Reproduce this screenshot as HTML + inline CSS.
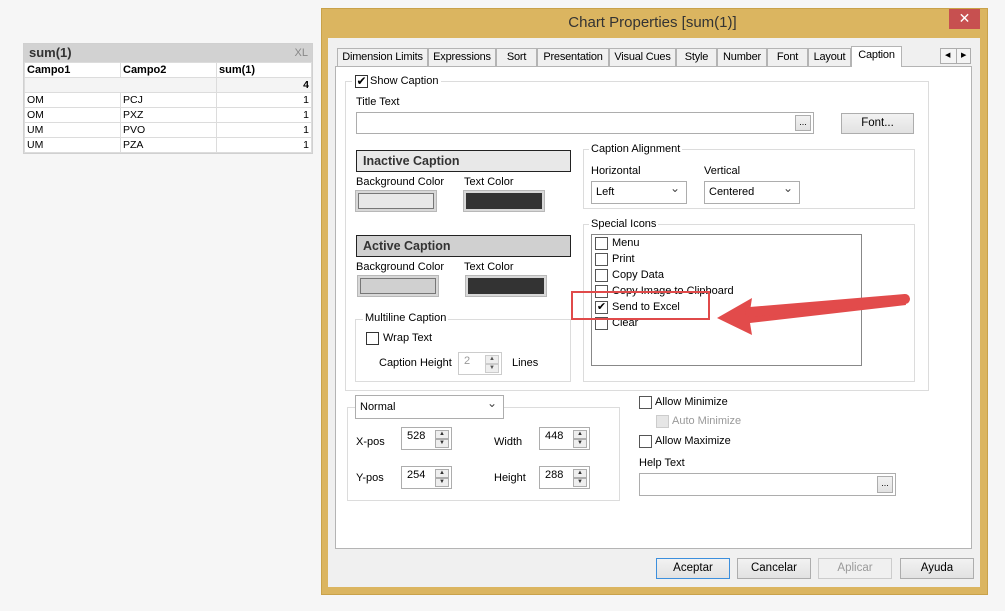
<!DOCTYPE html>
<html><head><meta charset="utf-8"><style>
*{box-sizing:border-box;margin:0;padding:0}
body{width:1005px;height:611px;background:#f6f6f6;font-family:"Liberation Sans",sans-serif;font-size:11px;color:#000;position:relative;overflow:hidden}
.a{position:absolute;white-space:nowrap}
.tab{position:absolute;top:48px;height:19px;background:#f0f0f0;border:1px solid #b4b4b4;border-bottom:none;font-size:11px;line-height:17px;text-align:center;letter-spacing:-0.2px}
.grp{position:absolute;border:1px solid #dcdcdc}
.gl{position:absolute;background:#fff;padding:0 2px;font-size:11px;line-height:13px}
.cb{position:absolute;width:13px;height:13px;border:1px solid #333;background:#fff}
.inp{position:absolute;border:1px solid #adadad;background:#fff}
.btn{position:absolute;border:1px solid #adadad;background:linear-gradient(#f2f2f2,#e2e2e2);text-align:center;font-size:11.5px}
.sel{position:absolute;border:1px solid #adadad;background:#fff;font-size:11px;line-height:20px;padding-left:4px}
.sel:after{content:"⌄";position:absolute;right:6px;top:-4px;font-size:12px;color:#444}
.spin{position:absolute;border:1px solid #adadad;background:#fff;font-size:11px;padding-left:5px;line-height:16px}
.sp{position:absolute;right:2px;width:14px;height:9px;border:1px solid #adadad;background:#eee;font-size:6px;line-height:7px;text-align:center;color:#333}
td{border:1px solid #dcdcdc;padding:0 2px;height:15px;font-size:10.5px}
</style></head><body>
<div class="a" style="left:23px;top:43px;width:290px;height:111px;border:1px solid #d0d0d0;background:#fff">
<div style="height:18px;background:#d2d2d2;font-weight:bold;font-size:13px;padding-left:5px;line-height:18px;color:#333">sum(1)<span style="position:absolute;right:4px;font-weight:normal;color:#888;font-size:11px">XL</span></div>
<table style="border-collapse:collapse;width:100%">
<tr><td style="width:96px;font-weight:bold;font-size:11px">Campo1</td><td style="width:96px;font-weight:bold;font-size:11px">Campo2</td><td style="font-weight:bold;font-size:11px">sum(1)</td></tr>
<tr><td colspan="2" style="background:#f4f4f4"></td><td style="text-align:right;font-weight:bold;background:#f4f4f4">4</td></tr>
<tr><td>OM</td><td>PCJ</td><td style="text-align:right">1</td></tr>
<tr><td>OM</td><td>PXZ</td><td style="text-align:right">1</td></tr>
<tr><td>UM</td><td>PVO</td><td style="text-align:right">1</td></tr>
<tr><td>UM</td><td>PZA</td><td style="text-align:right">1</td></tr>
</table></div>
<div class="a" style="left:321px;top:8px;width:667px;height:587px;background:#dbb560;border:1px solid #c9a24a"></div>
<div class="a" style="left:0;top:12px;width:1305px;text-align:center;font-size:15px;color:#333;line-height:22px">Chart Properties [sum(1)]</div>
<div class="a" style="left:949px;top:9px;width:31px;height:20px;background:#c75050;color:#fff;text-align:center;font-size:14px;line-height:19px">✕</div>
<div class="a" style="left:328px;top:38px;width:652px;height:549px;background:#f0f0f0"></div>
<div class="tab" style="left:337px;width:91px">Dimension Limits</div>
<div class="tab" style="left:428px;width:68px">Expressions</div>
<div class="tab" style="left:496px;width:41px">Sort</div>
<div class="tab" style="left:537px;width:72px">Presentation</div>
<div class="tab" style="left:609px;width:67px">Visual Cues</div>
<div class="tab" style="left:676px;width:41px">Style</div>
<div class="tab" style="left:717px;width:50px">Number</div>
<div class="tab" style="left:767px;width:41px">Font</div>
<div class="tab" style="left:808px;width:43px">Layout</div>
<div class="a" style="left:335px;top:66px;width:637px;height:483px;background:#fff;border:1px solid #b4b4b4"></div>
<div class="tab" style="left:851px;top:46px;width:51px;height:21px;background:#fff;z-index:2">Caption</div>
<div class="a" style="left:940px;top:48px;width:31px;height:16px;border:1px solid #adadad;background:#f4f4f4;font-size:7px;line-height:14px"><span style="position:absolute;left:4px">◀</span><span style="position:absolute;left:15px;top:0;border-left:1px solid #adadad;height:14px;padding-left:4px">▶</span></div>
<div class="grp" style="left:345px;top:81px;width:584px;height:310px"></div>
<div class="gl" style="left:352px;top:75px;padding-left:18px">Show Caption</div>
<div class="cb" style="left:355px;top:75px;font-size:12px;line-height:11px;text-align:center">✔</div>
<div class="a" style="left:356px;top:96px">Title Text</div>
<div class="inp" style="left:356px;top:112px;width:458px;height:22px"></div>
<div class="btn" style="left:795px;top:115px;width:16px;height:16px;font-size:9px;line-height:12px">...</div>
<div class="btn" style="left:841px;top:113px;width:73px;height:21px;line-height:19px">Font...</div>
<div class="a" style="left:356px;top:150px;width:215px;height:22px;background:#e8e8e8;border:1px solid #222;font-weight:bold;font-size:12.5px;color:#333;padding-left:6px;line-height:20px">Inactive Caption</div>
<div class="a" style="left:356px;top:176px">Background Color</div><div class="a" style="left:464px;top:176px">Text Color</div>
<div class="a" style="left:355px;top:190px;width:82px;height:22px;border:1px solid #b8b8b8;background:#d8d8d8;padding:2px"><div style="width:100%;height:100%;background:#e8e8e8;border:1px solid #777"></div></div>
<div class="a" style="left:463px;top:190px;width:82px;height:22px;border:1px solid #b8b8b8;background:#d8d8d8;padding:2px"><div style="width:100%;height:100%;background:#333"></div></div>
<div class="a" style="left:356px;top:235px;width:215px;height:22px;background:#d0d0d0;border:1px solid #222;font-weight:bold;font-size:12.5px;color:#333;padding-left:6px;line-height:20px">Active Caption</div>
<div class="a" style="left:356px;top:261px">Background Color</div><div class="a" style="left:464px;top:261px">Text Color</div>
<div class="a" style="left:357px;top:275px;width:82px;height:22px;border:1px solid #b8b8b8;background:#d8d8d8;padding:2px"><div style="width:100%;height:100%;background:#d0d0d0;border:1px solid #777"></div></div>
<div class="a" style="left:465px;top:275px;width:82px;height:22px;border:1px solid #b8b8b8;background:#d8d8d8;padding:2px"><div style="width:100%;height:100%;background:#333"></div></div>
<div class="grp" style="left:355px;top:319px;width:216px;height:63px"></div>
<div class="gl" style="left:363px;top:312px">Multiline Caption</div>
<div class="cb" style="left:366px;top:332px"></div><div class="a" style="left:383px;top:332px">Wrap Text</div>
<div class="a" style="left:379px;top:357px">Caption Height</div>
<div class="spin" style="left:458px;top:352px;width:44px;height:23px;color:#999;border-color:#ccc">2<div class="sp" style="top:2px;color:#555;border-color:#ccc">▲</div><div class="sp" style="top:11px;color:#555;border-color:#ccc">▼</div></div>
<div class="a" style="left:512px;top:357px">Lines</div>
<div class="grp" style="left:583px;top:149px;width:332px;height:60px"></div>
<div class="gl" style="left:589px;top:143px">Caption Alignment</div>
<div class="a" style="left:591px;top:165px">Horizontal</div><div class="a" style="left:704px;top:165px">Vertical</div>
<div class="sel" style="left:591px;top:181px;width:96px;height:23px">Left</div>
<div class="sel" style="left:704px;top:181px;width:96px;height:23px">Centered</div>
<div class="grp" style="left:583px;top:224px;width:332px;height:158px"></div>
<div class="gl" style="left:589px;top:218px">Special Icons</div>
<div class="inp" style="left:591px;top:234px;width:271px;height:132px;border-color:#888"></div>
<div class="cb" style="left:595px;top:237px;border-color:#555"></div><div class="a" style="left:612px;top:237px">Menu</div>
<div class="cb" style="left:595px;top:253px;border-color:#555"></div><div class="a" style="left:612px;top:253px">Print</div>
<div class="cb" style="left:595px;top:269px;border-color:#555"></div><div class="a" style="left:612px;top:269px">Copy Data</div>
<div class="cb" style="left:595px;top:285px;border-color:#555"></div><div class="a" style="left:612px;top:285px">Copy Image to Clipboard</div>
<div class="cb" style="left:595px;top:301px;border-color:#555;font-size:11px;line-height:11px;text-align:center">✔</div><div class="a" style="left:612px;top:301px">Send to Excel</div>
<div class="cb" style="left:595px;top:317px;border-color:#555"></div><div class="a" style="left:612px;top:317px">Clear</div>
<div class="a" style="left:571px;top:291px;width:139px;height:29px;border:2px solid #e04a4a"></div>
<svg class="a" style="left:700px;top:280px" width="220" height="60"><polygon points="17,38 52,18 50,31 204,15 206,25 50,43 52,55" fill="#e24b4b"/><line x1="50" y1="32" x2="205" y2="19" stroke="#e24b4b" stroke-width="10" stroke-linecap="round"/></svg>
<div class="grp" style="left:347px;top:407px;width:273px;height:94px"></div>
<div class="sel" style="left:355px;top:395px;width:149px;height:24px;line-height:22px">Normal</div>
<div class="a" style="left:356px;top:436px">X-pos</div><div class="a" style="left:494px;top:436px">Width</div>
<div class="a" style="left:356px;top:472px">Y-pos</div><div class="a" style="left:494px;top:472px">Height</div>
<div class="spin" style="left:401px;top:427px;width:51px;height:23px">528<div class="sp" style="top:2px">▲</div><div class="sp" style="top:11px">▼</div></div>
<div class="spin" style="left:539px;top:427px;width:51px;height:23px">448<div class="sp" style="top:2px">▲</div><div class="sp" style="top:11px">▼</div></div>
<div class="spin" style="left:401px;top:466px;width:51px;height:23px">254<div class="sp" style="top:2px">▲</div><div class="sp" style="top:11px">▼</div></div>
<div class="spin" style="left:539px;top:466px;width:51px;height:23px">288<div class="sp" style="top:2px">▲</div><div class="sp" style="top:11px">▼</div></div>
<div class="cb" style="left:639px;top:396px;border-color:#555"></div><div class="a" style="left:655px;top:396px">Allow Minimize</div>
<div class="cb" style="left:656px;top:415px;border-color:#ccc;background:#e6e6e6"></div><div class="a" style="left:672px;top:415px;color:#999">Auto Minimize</div>
<div class="cb" style="left:639px;top:435px;border-color:#555"></div><div class="a" style="left:655px;top:435px">Allow Maximize</div>
<div class="a" style="left:639px;top:457px">Help Text</div>
<div class="inp" style="left:639px;top:473px;width:257px;height:23px"></div>
<div class="btn" style="left:877px;top:476px;width:16px;height:17px;font-size:9px;line-height:12px">...</div>
<div class="btn" style="left:656px;top:558px;width:74px;height:21px;line-height:19px;border-color:#3c8fdd">Aceptar</div>
<div class="btn" style="left:737px;top:558px;width:74px;height:21px;line-height:19px">Cancelar</div>
<div class="btn" style="left:818px;top:558px;width:74px;height:21px;line-height:19px;color:#999;border-color:#ccc;background:#f0f0f0">Aplicar</div>
<div class="btn" style="left:900px;top:558px;width:74px;height:21px;line-height:19px">Ayuda</div>
</body></html>
